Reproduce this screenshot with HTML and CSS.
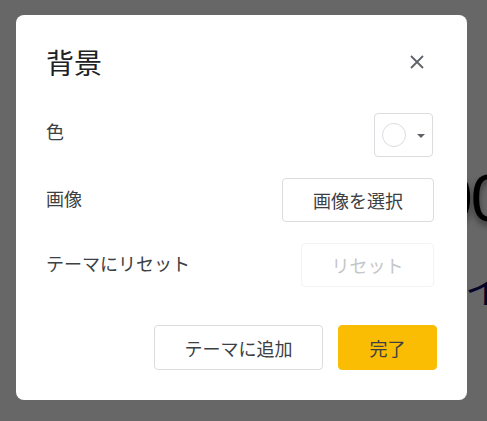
FILE: index.html
```html
<!DOCTYPE html>
<html lang="ja">
<head>
<meta charset="utf-8">
<title>背景</title>
<link rel="stylesheet" href="styles.css">
</head>
<body>
<div class="page">
  <div class="page-big">00</div>
  <div class="page-small">イ</div>
</div>
<div class="backdrop">
  <div class="dialog" role="dialog" aria-label="背景">
    <div class="dialog-header">
      <h1 class="dialog-title">背景</h1>
      <button class="close-btn" aria-label="閉じる">
        <svg width="14" height="14" viewBox="0 0 14 14"><path d="M1 1L13 13M13 1L1 13" stroke="#5f6368" stroke-width="1.8" fill="none"/></svg>
      </button>
    </div>
    <div class="rows">
      <div class="row">
        <span class="row-label">色</span>
        <button class="color-btn" aria-label="色">
          <span class="swatch"></span>
          <span class="caret"></span>
        </button>
      </div>
      <div class="row">
        <span class="row-label">画像</span>
        <button class="btn">画像を選択</button>
      </div>
      <div class="row">
        <span class="row-label">テーマにリセット</span>
        <button class="btn btn-disabled" disabled>リセット</button>
      </div>
    </div>
    <div class="dialog-footer">
      <button class="btn btn-footer">テーマに追加</button>
      <button class="btn btn-footer btn-primary">完了</button>
    </div>
  </div>
</div>
</body>
</html>
```
FILE: styles.css
```css
html, body {
  margin: 0;
  padding: 0;
  width: 487px;
  height: 421px;
  overflow: hidden;
}
body {
  background: #676767;
  font-family: "Noto Sans CJK JP", "Noto Sans", sans-serif;
  position: relative;
}
.page {
  position: absolute;
  inset: 0;
}
.page-big {
  position: absolute;
  left: 436px;
  top: 160px;
  font-family: "Liberation Sans", sans-serif;
  font-size: 66px;
  line-height: 76px;
  color: #000;
  text-shadow: 0 4px 6px rgba(0,0,0,0.45);
  letter-spacing: -2px;
  white-space: nowrap;
}
.page-small {
  position: absolute;
  left: 465px;
  top: 264px;
  font-size: 38px;
  line-height: 46px;
  color: #05052a;
  white-space: nowrap;
}
.backdrop {
  position: absolute;
  inset: 0;
  display: flex;
  align-items: flex-start;
  padding: 15px 0 0 16px;
  box-sizing: border-box;
}
.dialog {
  width: 451px;
  height: 385px;
  box-sizing: border-box;
  background: #fff;
  border-radius: 8px;
  padding: 30px 30px 30px 30px;
  display: flex;
  flex-direction: column;
}
.dialog-header {
  display: flex;
  align-items: center;
  justify-content: space-between;
  height: 34px;
}
.dialog-title {
  margin: 0;
  font-size: 28px;
  line-height: 34px;
  font-weight: 400;
  color: #202124;
}
.close-btn {
  width: 40px;
  height: 40px;
  border: none;
  background: none;
  padding: 0;
  display: flex;
  align-items: center;
  justify-content: center;
}
.rows {
  margin-top: 34px;
  padding-right: 3px;
  display: flex;
  flex-direction: column;
  gap: 21px;
}
.row {
  display: flex;
  align-items: center;
  justify-content: space-between;
  height: 44px;
}
.row-label {
  font-size: 18px;
  color: #3c4043;
  white-space: nowrap;
}
.row:first-child .row-label {
  position: relative;
  top: -4px;
}
.row:nth-child(2) .row-label,
.row:nth-child(3) .row-label {
  position: relative;
  top: -2px;
}
.btn {
  height: 44px;
  box-sizing: border-box;
  border: 1px solid #dadce0;
  border-radius: 4px;
  background: #fff;
  padding: 0 30px;
  font-family: inherit;
  font-size: 18px;
  color: #3c4043;
  white-space: nowrap;
  cursor: pointer;
}
.btn-disabled {
  border-color: #f1f3f4;
  color: #c4c7c9;
  width: 133px;
  padding: 0;
}
.color-btn {
  width: 59px;
  height: 44px;
  box-sizing: border-box;
  border: 1px solid #dadce0;
  border-radius: 4px;
  background: #fff;
  padding: 0 7px;
  display: flex;
  align-items: center;
  justify-content: space-between;
  margin-right: 1px;
}
.swatch {
  width: 24px;
  height: 24px;
  box-sizing: border-box;
  border: 1px solid #dadce0;
  border-radius: 50%;
  background: #fff;
}
.caret {
  width: 0;
  height: 0;
  border-left: 4px solid transparent;
  border-right: 4px solid transparent;
  border-top: 4px solid #5f6368;
  margin-top: 2px;
}
.dialog-footer {
  margin-top: auto;
  display: flex;
  justify-content: flex-end;
  gap: 15px;
}
.btn-footer {
  height: 45px;
  width: 169px;
  padding: 0;
}
.btn-primary {
  width: 99px;
  background: #fbbc04;
  border-color: #fbbc04;
  color: #3c4043;
}
```
